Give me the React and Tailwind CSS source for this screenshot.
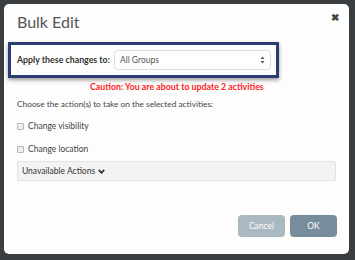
const App = () => {
  return (
    <div className="w-[355px] h-[260px] bg-[#3b3e40] p-[4px] pr-[6px] pb-[6px] overflow-hidden" style={{ fontFamily: 'Lato, "Open Sans", sans-serif' }}>
      <div className="h-[250px] bg-[#fdfdfd] rounded-[5px] flex flex-col relative">
        <div className="flex items-start justify-between pl-[13px] pr-[10px] pt-[9px] h-[34px]">
          <h2 className="text-[16px] text-[#555] leading-[18px]">Bulk Edit</h2>
          <span className="mt-[-1px] text-[10px] font-bold text-[#444] leading-none">✖</span>
        </div>
        <div className="mt-[4px] ml-[4px] w-[271px] h-[36px] border-[3px] border-[#2c3b72] shadow-[0_2px_4px_rgba(0,0,0,0.4)] flex items-center pl-[6px] gap-[4px]">
          <span className="text-[8.8px] font-bold text-[#333] whitespace-nowrap">Apply these changes to:</span>
          <div className="w-[157px] h-[20px] border border-[#ddd] rounded-[4px] bg-white flex items-center justify-between px-[5px]">
            <span className="text-[8.5px] text-[#555]">All Groups</span>
            <svg width="5" height="8" viewBox="0 0 5 8"><path d="M2.5 0.5 L4.5 3 H0.5Z M2.5 7.5 L4.5 5 H0.5Z" fill="#555" /></svg>
          </div>
        </div>
        <div className="pl-[86px] mt-[3px] text-[8.8px] font-bold text-[#ff1a1a] leading-[12px]">Caution: You are about to update 2 activities</div>
        <div className="px-[13px]">
          <p className="mt-[5px] text-[8.3px] text-[#444] leading-[12px]">Choose the action(s) to take on the selected activities:</p>
          <label className="mt-[10px] flex items-center gap-[4px] text-[8.5px] text-[#444] leading-[12px]">
            <span className="w-[7px] h-[7px] border border-[#b5b5b5] rounded-[1px] bg-[#eee]" />
            Change visibility
          </label>
          <label className="mt-[11px] flex items-center gap-[4px] text-[8.5px] text-[#444] leading-[12px]">
            <span className="w-[7px] h-[7px] border border-[#b5b5b5] rounded-[1px] bg-[#eee]" />
            Change location
          </label>
          <div className="mt-[6px] h-[20px] bg-[#f3f3f3] border border-[#e2e2e2] rounded-[2px] flex items-center pl-[4px] gap-[3px]">
            <span className="text-[8.5px] text-[#333]">Unavailable Actions</span>
            <svg width="7" height="5" viewBox="0 0 7 5"><path d="M0.8 0.8 L3.5 3.8 L6.2 0.8" fill="none" stroke="#333" strokeWidth="1.8" /></svg>
          </div>
        </div>
        <div className="mt-auto mb-[17px] pr-[12px] flex justify-end gap-[5px]">
          <button className="w-[47px] h-[22px] rounded-[4px] bg-[#a9b8c1] text-white text-[8.5px]">Cancel</button>
          <button className="w-[47px] h-[22px] rounded-[4px] bg-[#778d9b] text-white text-[8.5px]">OK</button>
        </div>
      </div>
    </div>
  );
};

export default App;
